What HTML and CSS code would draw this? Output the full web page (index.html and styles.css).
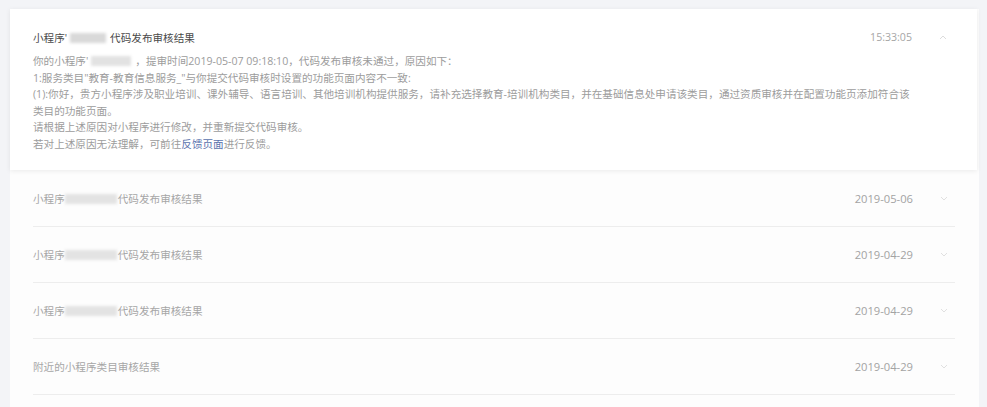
FILE: index.html
```html
<!DOCTYPE html>
<html lang="zh-CN">
<head>
    <meta charset="UTF-8">
    <meta name="viewport" content="width=device-width, initial-scale=1.0">
    <title>消息通知</title>
    <link rel="stylesheet" href="styles.css">
</head>
<body>
    <div class="panel">
        <div class="msg open">
            <div class="msg-head">
                <div class="msg-title">小程序'<span class="mask"></span>代码发布审核结果</div>
                <div class="msg-time">15:33:05</div>
                <div class="arrow">
                    <svg width="8" height="5" viewBox="0 0 8 5"><polyline points="1,4 4,1 7,4" fill="none" stroke="#dcdcdc" stroke-width="1"/></svg>
                </div>
            </div>
            <div class="msg-body">
                <p>你的小程序'<span class="mask wide"></span>，提审时间2019-05-07 09:18:10，代码发布审核未通过，原因如下：</p>
                <p>1:服务类目"教育-教育信息服务_"与你提交代码审核时设置的功能页面内容不一致:</p>
                <p>(1):你好，贵方小程序涉及职业培训、课外辅导、语言培训、其他培训机构提供服务，请补充选择教育-培训机构类目，并在基础信息处申请该类目，通过资质审核并在配置功能页添加符合该类目的功能页面。</p>
                <p>请根据上述原因对小程序进行修改，并重新提交代码审核。</p>
                <p>若对上述原因无法理解，可前往<a href="#">反馈页面</a>进行反馈。</p>
            </div>
        </div>

        <ul class="list">
            <li class="row">
                <div class="row-title">小程序<span class="mask long"></span>代码发布审核结果</div>
                <div class="row-date">2019-05-06</div>
                <div class="arrow">
                    <svg width="8" height="5" viewBox="0 0 8 5"><polyline points="1,1 4,4 7,1" fill="none" stroke="#e0e0e0" stroke-width="1"/></svg>
                </div>
            </li>
            <li class="row">
                <div class="row-title">小程序<span class="mask long"></span>代码发布审核结果</div>
                <div class="row-date">2019-04-29</div>
                <div class="arrow">
                    <svg width="8" height="5" viewBox="0 0 8 5"><polyline points="1,1 4,4 7,1" fill="none" stroke="#e0e0e0" stroke-width="1"/></svg>
                </div>
            </li>
            <li class="row">
                <div class="row-title">小程序<span class="mask long"></span>代码发布审核结果</div>
                <div class="row-date">2019-04-29</div>
                <div class="arrow">
                    <svg width="8" height="5" viewBox="0 0 8 5"><polyline points="1,1 4,4 7,1" fill="none" stroke="#e0e0e0" stroke-width="1"/></svg>
                </div>
            </li>
            <li class="row">
                <div class="row-title">附近的小程序类目审核结果</div>
                <div class="row-date">2019-04-29</div>
                <div class="arrow">
                    <svg width="8" height="5" viewBox="0 0 8 5"><polyline points="1,1 4,4 7,1" fill="none" stroke="#e0e0e0" stroke-width="1"/></svg>
                </div>
            </li>
        </ul>
    </div>
</body>
</html>
```

FILE: styles.css
```css
body {
    margin: 0;
    background: #f3f4f7;
    font-family: "Open Sans", "Noto Sans CJK SC", sans-serif;
    font-size: 10.6px;
    height: 407px;
    overflow: hidden;
}

.panel {
    margin: 9px 8px 0 10px;
    background: #fdfdfd;
    height: 398px;
}

.msg.open {
    background: #fff;
    box-shadow: 0 1px 5px rgba(0, 0, 0, 0.08);
    padding: 20px 23px 0 23px;
    height: 141px;
    margin-right: 2px;
}

.msg-head {
    display: flex;
    align-items: center;
    height: 16px;
}

.msg-title {
    flex: 1;
    color: #4a4a4a;
}

.msg-time {
    color: #a6a6a6;
    font-size: 10.6px;
}

.arrow {
    width: 26px;
    display: flex;
    justify-content: flex-end;
    padding-right: 7px;
    box-sizing: border-box;
    margin-left: 16px;
}

.arrow svg {
    display: block;
}

.msg-body {
    margin-top: 8px;
    color: #9c9c9c;
    line-height: 16.5px;
    width: 883px;
}

.msg-body p {
    margin: 0;
}

.msg-body a {
    color: #5a72ad;
    text-decoration: none;
}

.mask {
    display: inline-block;
    width: 36px;
    height: 10px;
    margin: 0 4px 0 3px;
    background: #d9d9d9;
    filter: blur(1.5px);
    vertical-align: -1px;
}

.mask.wide {
    width: 40px;
    background: #e2e2e2;
}

.mask.long {
    width: 52px;
    margin: 0 1px 0 0;
    background: #e3e3e3;
}

.list {
    list-style: none;
    margin: 0 24px 0 23px;
    padding: 0;
}

.row {
    display: flex;
    align-items: center;
    height: 55px;
    border-bottom: 1px solid #ededed;
}

.row:first-child {
    margin-top: 1px;
}

.row-title {
    flex: 1;
    color: #a6a6a6;
}

.row-date {
    color: #a3a3a3;
    font-size: 11.2px;
}
```
